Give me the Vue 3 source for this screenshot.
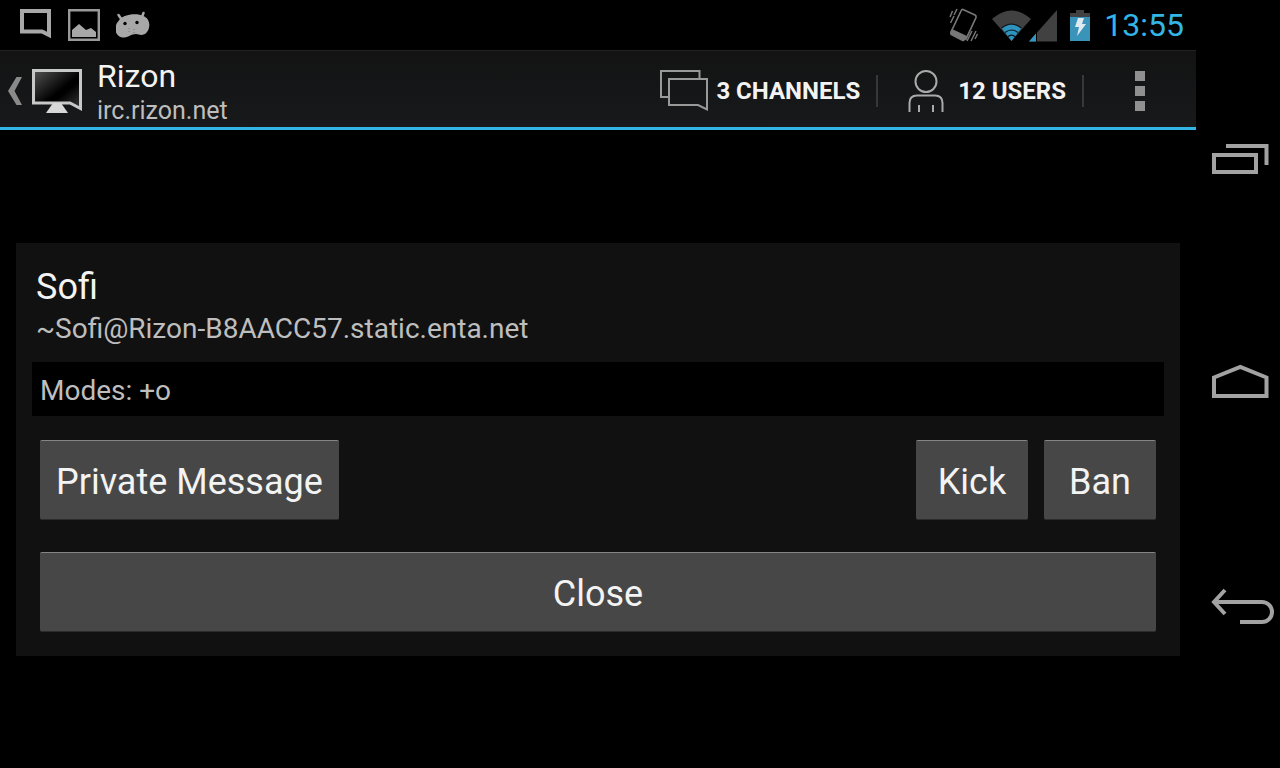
<script setup>
import { ref } from 'vue'

const time = ref('13:55')
const server = ref({ name: 'Rizon', host: 'irc.rizon.net', channels: 3, users: 12 })
const user = ref({
  nick: 'Sofi',
  mask: '~Sofi@Rizon-B8AACC57.static.enta.net',
  modes: '+o'
})
const isDialogOpen = ref(true)

const closeDialog = () => {
  isDialogOpen.value = false
}
</script>

<template>
  <div class="device">
    <div class="screen">
      <div class="status-bar">
        <div class="notifications">
          <svg width="32" height="34" viewBox="0 0 32 34" aria-hidden="true">
            <path d="M2 3H29V27L22 23.500H2Z" fill="none" stroke="#a8a8a8" stroke-width="4" />
          </svg>
          <svg width="32" height="34" viewBox="0 0 32 34" aria-hidden="true">
            <path d="M1.200 2.200H30.800V31.800H1.200Z" fill="none" stroke="#9a9a9a" stroke-width="2.400" />
            <path d="M4 29V22L11 16L18 22L23 20L28 24V29Z" fill="#a8a8a8" />
          </svg>
          <svg width="34" height="34" viewBox="0 0 34 34" aria-hidden="true">
            <path d="M2.500 7L6 12M27.500 5L26 9" stroke="#a8a8a8" stroke-width="2.500" stroke-linecap="round" />
            <path d="M4 11C9 6 22 5 27 8C34 10 35 19 31 24C28 28 24 27 20 26C15 26 12 30 6 29.500C-1 28-2 20 1 15Z" fill="#a8a8a8" />
            <circle cx="9" cy="15.500" r="1.700" fill="#000" />
            <circle cx="21" cy="14.500" r="1.700" fill="#000" />
            <path d="M13 20V21M13 23V24M18 21V22M18 24V25" stroke="#777" />
          </svg>
        </div>
        <div class="indicators">
          <svg width="32" height="36" viewBox="0 0 32 36" aria-hidden="true">
            <path d="M15 2.500L27 8Q28.500 9 28 10.500L18 32L3 25L13 4Q13.800 2 15 2.500Z" fill="none" stroke="#777" stroke-width="1.700" />
            <path d="M2 26L4 22L19 29L17 33Q16 35 14 34L3.500 28.500Q1.500 27.500 2 26Z" fill="#777" />
            <path d="M2.500 16L6 9M2 10L4.500 4M6 8L9 2M19 34L24 24M23 34L28 24M27 32L29.500 27" stroke="#777" stroke-width="1.500" />
          </svg>
          <svg width="66" height="36" viewBox="0 0 66 36" aria-hidden="true">
            <path d="M0 12Q19.500-5 39 12L19.500 34Z" fill="#414141" />
            <path d="M10 21.500Q19.500 14 29 21.500L19.500 34Z" fill="#2e93bf" />
            <path d="M9.500 21Q19.500 13 29.500 21M13 25.500Q19.500 20.500 26 25.500M15.500 30Q19.500 26 23.500 30" fill="none" stroke="#0b1a21" stroke-width="1.200" />
            <path d="M37 34.500L65 3V34.500Z" fill="#414141" />
            <path d="M37 34.500L44 26.500V34.500Z" fill="#3299c4" />
            <path d="M44.500 25V35" stroke="#000" />
          </svg>
          <svg width="20" height="36" viewBox="0 0 20 36" aria-hidden="true">
            <path d="M6 3H14V6H20V10H0V6H6Z" fill="#414141" />
            <path d="M0 10H20V34H0Z" fill="#3a94ba" />
            <path d="M8 11H14L12 17H16L7 29L9 20H5Z" fill="#dfeaf0" />
          </svg>
          <time class="clock">{{ time }}</time>
        </div>
      </div>

      <header class="action-bar">
        <a href="#" class="up-link" aria-label="Back to servers">
          <svg width="14" height="28" viewBox="0 0 14 28" aria-hidden="true">
            <path d="M8.500 0H14L6.500 14L14 28H8.500L0 14Z" fill="#8a8a8a" />
          </svg>
          <svg width="50" height="44" viewBox="0 0 50 44" aria-hidden="true">
            <defs>
              <linearGradient id="glass" x1="0" y1="0" x2="1" y2="1">
                <stop offset="0" stop-color="#555" />
                <stop offset="0.550" stop-color="#000" />
                <stop offset="0.620" stop-color="#000" />
                <stop offset="1" stop-color="#3a3a3a" />
              </linearGradient>
            </defs>
            <path d="M1.500 1.500H48.500V39.500L38 34H1.500Z" fill="url(#glass)" stroke="#c8c8c8" stroke-width="3" />
            <path d="M21 34H29L36 44H14Z" fill="#d8d8d8" />
          </svg>
        </a>
        <div class="titles">
          <h1 class="title">{{ server.name }}</h1>
          <p class="subtitle">{{ server.host }}</p>
        </div>
        <nav class="actions" aria-label="Server actions">
          <button type="button" class="action">
            <svg width="48" height="42" viewBox="0 0 48 42" aria-hidden="true">
              <path d="M8 27H1V1H39.500V8" fill="none" stroke="#999" stroke-width="2" />
              <path d="M9 9H47V39.500L38 35H9Z" fill="none" stroke="#999" stroke-width="2" />
            </svg>
            {{ server.channels }} CHANNELS
          </button>
          <button type="button" class="action users">
            <svg width="48" height="42" viewBox="0 0 48 42" aria-hidden="true">
              <circle cx="24" cy="11.500" r="10.500" fill="none" stroke="#aaa" stroke-width="2" />
              <path d="M7.500 42V33Q7.500 25.500 15 25.500H33Q40.500 25.500 40.500 33V42M17 42V35M31 42V35" fill="none" stroke="#aaa" stroke-width="2" />
            </svg>
            {{ server.users }} USERS
          </button>
          <button type="button" class="overflow" aria-label="More options">
            <svg width="10" height="40" viewBox="0 0 10 40" aria-hidden="true">
              <path d="M0 0H10V10H0ZM0 15H10V25H0ZM0 30H10V40H0Z" fill="#909090" />
            </svg>
          </button>
        </nav>
      </header>

      <main class="content">
        <section v-if="isDialogOpen" class="dialog" role="dialog" aria-labelledby="nick">
          <div class="identity">
            <h2 id="nick" class="nick">{{ user.nick }}</h2>
            <p class="mask">{{ user.mask }}</p>
          </div>
          <p class="modes">Modes: {{ user.modes }}</p>
          <div class="buttons">
            <button type="button" class="btn">Private Message</button>
            <div class="moderation">
              <button type="button" class="btn">Kick</button>
              <button type="button" class="btn">Ban</button>
            </div>
          </div>
          <div class="buttons">
            <button type="button" class="btn wide" @click="closeDialog">Close</button>
          </div>
        </section>
      </main>
    </div>

    <nav class="system-bar" aria-label="System">
      <button type="button" class="key" aria-label="Recent apps">
        <svg width="84" height="60" viewBox="0 0 84 60" aria-hidden="true">
          <path d="M18 25H60V42H18ZM30 16H70.500V35" />
        </svg>
      </button>
      <button type="button" class="key" aria-label="Home">
        <svg width="84" height="60" viewBox="0 0 84 60" aria-hidden="true">
          <path d="M18 42V23.500L44.300 13L70.500 23.500V42Z" />
        </svg>
      </button>
      <button type="button" class="key" aria-label="Back">
        <svg width="84" height="60" viewBox="0 0 84 60" aria-hidden="true">
          <path d="M18 24H66A10 10 0 0 1 66 44H44M29 12L18 24L29 36" />
        </svg>
      </button>
    </nav>
  </div>
</template>

<style>
body {
  margin: 0;
  background: #000;
}
</style>

<style scoped>
* {
  box-sizing: border-box;
}

h1, h2, p {
  margin: 0;
  font-weight: 400;
}

button {
  margin: 0;
  padding: 0;
  border: 0;
  background: none;
  color: inherit;
  font-family: inherit;
  cursor: pointer;
}

svg {
  display: block;
  flex: none;
}

.device {
  display: flex;
  min-height: 100vh;
  background: #000;
  color: #f3f3f3;
  font-family: Roboto, "Liberation Sans", sans-serif;
}

.screen {
  flex: 1;
  display: flex;
  flex-direction: column;
}

/* Status bar */
.status-bar {
  display: flex;
  align-items: center;
  justify-content: space-between;
  height: 50px;
  padding: 0 12px 0 20px;
}

.notifications {
  display: flex;
  gap: 16px;
}

.indicators {
  display: flex;
  align-items: center;
  gap: 12px;
}

.clock {
  margin-left: 2px;
  color: #33b5e5;
  font-size: 32px;
  line-height: 40px;
}

/* Action bar */
.action-bar {
  display: flex;
  align-items: center;
  height: 80px;
  padding-top: 4px;
  border-top: 1px solid #222;
  border-bottom: 3px solid #33b5e5;
  background: linear-gradient(#131313, #17191b);
}

.up-link {
  display: flex;
  align-items: center;
  gap: 10px;
  padding: 0 12px 0 8px;
}

.titles {
  flex: 1;
  padding-left: 3px;
}

.title {
  font-size: 32px;
  line-height: 40px;
}

.subtitle {
  color: #bebebe;
  font-size: 25px;
  line-height: 30px;
}

.actions {
  display: flex;
  align-items: center;
}

.action {
  display: flex;
  align-items: center;
  gap: 8px;
  height: 32px;
  padding-right: 16px;
  border-right: 2px solid #363839;
  font-size: 24px;
  font-weight: 700;
}

.users {
  padding-left: 24px;
}

.overflow {
  display: flex;
  justify-content: center;
  width: 112px;
}

/* User dialog */
.content {
  flex: 1;
  display: flex;
  flex-direction: column;
  justify-content: center;
  padding: 16px;
}

.dialog {
  padding: 22px 16px 8px;
  background: #111;
}

.identity {
  padding: 0 4px 13px;
}

.nick {
  font-size: 36px;
  line-height: 44px;
}

.mask {
  color: #bebebe;
  font-size: 28px;
  line-height: 40px;
}

.modes {
  padding: 10px 8px 6px;
  background: #000;
  color: #bebebe;
  font-size: 28px;
  line-height: 38px;
}

.buttons {
  display: flex;
  justify-content: space-between;
  padding: 24px 8px 8px;
}

.buttons + .buttons {
  padding-bottom: 16px;
}

.moderation {
  display: flex;
  gap: 16px;
}

.btn {
  min-width: 112px;
  height: 80px;
  padding: 4px 16px 0;
  border-top: 1px solid #858585;
  border-bottom: 1px solid #2c2c2c;
  border-radius: 2px;
  background: #474747;
  font-size: 36px;
}

.wide {
  flex: 1;
}

/* System keys */
.system-bar {
  display: flex;
  flex-direction: column;
  width: 84px;
  padding: 48px 0;
}

.key {
  flex: 1;
  display: flex;
  align-items: center;
}

.key path {
  fill: none;
  stroke: #a2a2a2;
  stroke-width: 4;
}
</style>
